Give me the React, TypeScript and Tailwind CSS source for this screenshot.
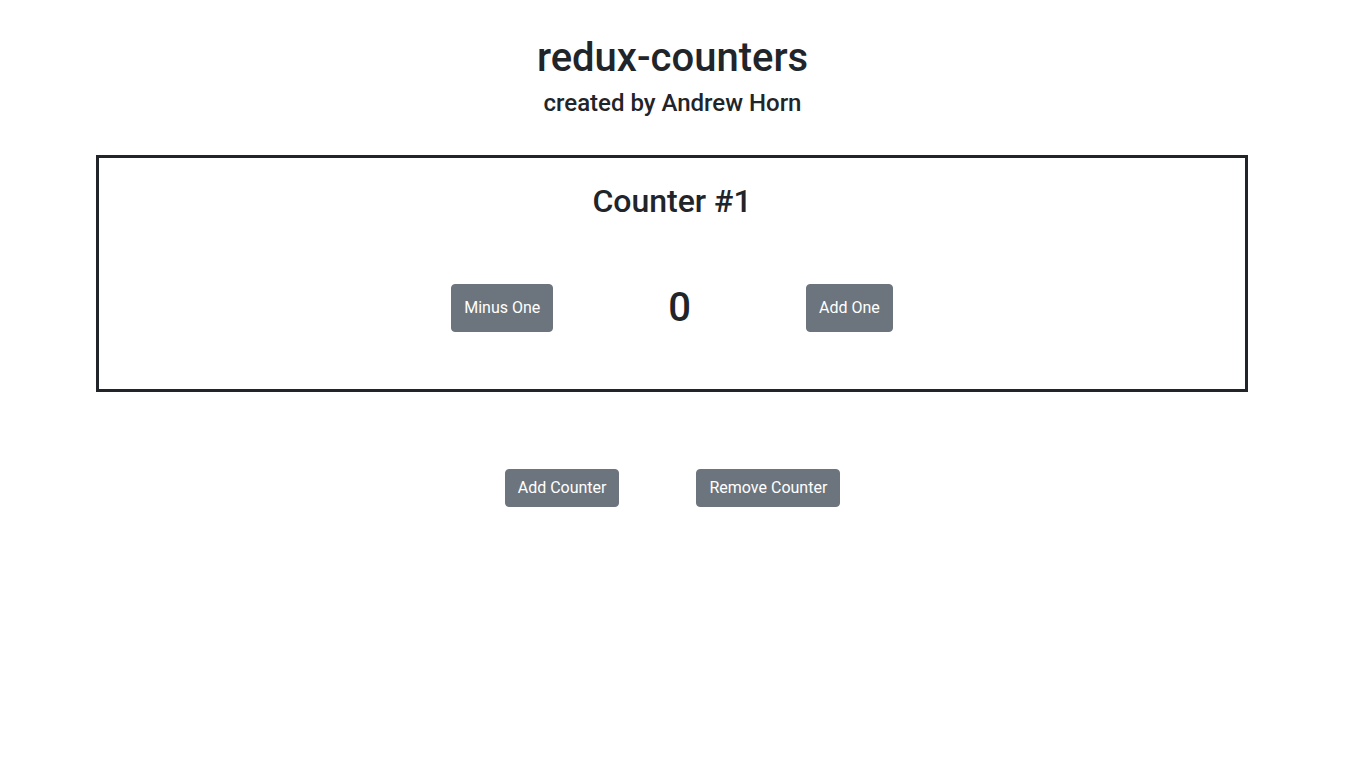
import React, { useState } from "react";

type Counter = { id: number; value: number };

export default function App() {
  const [counters, setCounters] = useState<Counter[]>([{ id: 1, value: 0 }]);

  const change = (id: number, delta: number) =>
    setCounters((cs) => cs.map((c) => (c.id === id ? { ...c, value: c.value + delta } : c)));

  const btn =
    "rounded-[4px] border border-[#6c757d] bg-[#6c757d] px-3 text-white text-[16px] leading-6 hover:bg-[#5a6268]";

  return (
    <div className="min-h-screen bg-white text-[#212529] font-['Roboto',sans-serif]">
      <div className="flex flex-col items-center pt-[34px]">
        <h1 className="text-[40px] leading-[48px] font-medium">redux-counters</h1>
        <h4 className="mt-[7px] text-[24px] leading-[29px] font-medium">created by Andrew Horn</h4>
      </div>

      <div className="ml-[96px] mt-[37px] flex w-[1152px] flex-col gap-[60px]">
        {counters.map((c) => (
          <div key={c.id} className="border-[3px] border-[#212529] h-[237px] flex flex-col items-center">
            <h2 className="mt-[24px] text-[32px] leading-[38px] font-medium">Counter #{c.id}</h2>
            <div className="mt-[64px] flex items-center justify-center gap-[115px]">
              <button className={`${btn} py-[11px]`} onClick={() => change(c.id, -1)}>
                Minus One
              </button>
              <span className="text-[40px] leading-[48px] font-medium">{c.value}</span>
              <button className={`${btn} py-[11px]`} onClick={() => change(c.id, 1)}>
                Add One
              </button>
            </div>
          </div>
        ))}
      </div>

      <div className="mt-[77px] flex justify-center gap-[77px]">
        <button
          className={`${btn} py-[6px]`}
          onClick={() => setCounters((cs) => [...cs, { id: cs.length + 1, value: 0 }])}
        >
          Add Counter
        </button>
        <button className={`${btn} py-[6px]`} onClick={() => setCounters((cs) => cs.slice(0, -1))}>
          Remove Counter
        </button>
      </div>
    </div>
  );
}
